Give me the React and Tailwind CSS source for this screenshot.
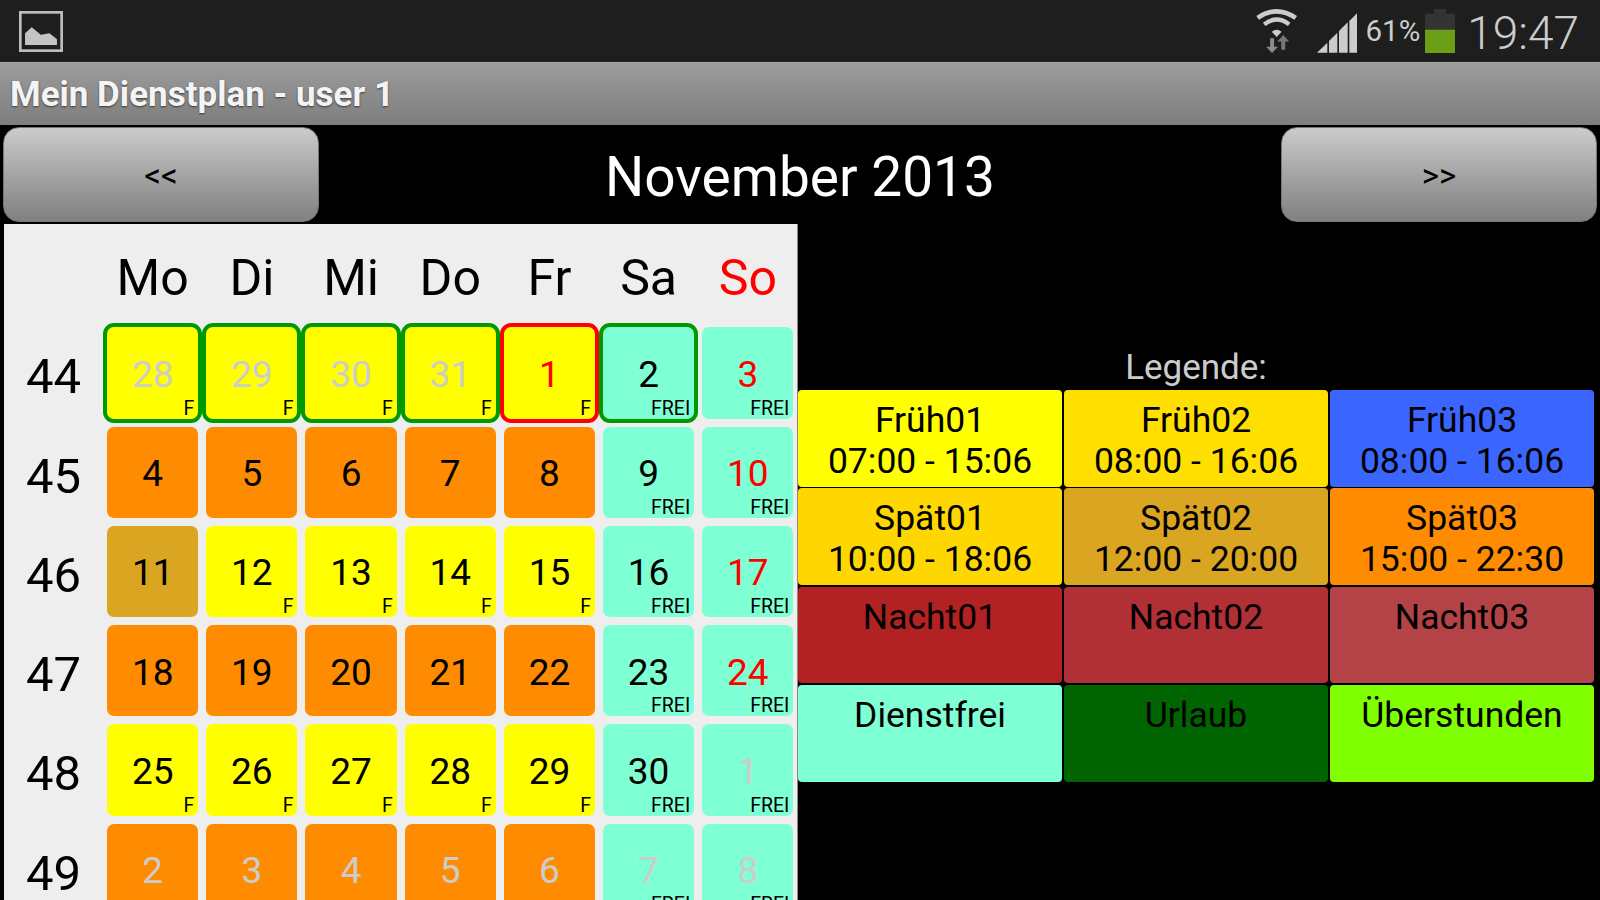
const weeks = [
  { nr: 44, days: [
    { d: 28, c: "bg-[#ffff00]", tag: "F", dim: true, ring: "border-[#009900]" },
    { d: 29, c: "bg-[#ffff00]", tag: "F", dim: true, ring: "border-[#009900]" },
    { d: 30, c: "bg-[#ffff00]", tag: "F", dim: true, ring: "border-[#009900]" },
    { d: 31, c: "bg-[#ffff00]", tag: "F", dim: true, ring: "border-[#009900]" },
    { d: 1, c: "bg-[#ffff00]", tag: "F", red: true, ring: "border-[#ff0000]" },
    { d: 2, c: "bg-[#7fffd4]", tag: "FREI", ring: "border-[#009900]" },
    { d: 3, c: "bg-[#7fffd4]", tag: "FREI", red: true },
  ] },
  { nr: 45, days: [
    { d: 4, c: "bg-[#ff8c00]" },
    { d: 5, c: "bg-[#ff8c00]" },
    { d: 6, c: "bg-[#ff8c00]" },
    { d: 7, c: "bg-[#ff8c00]" },
    { d: 8, c: "bg-[#ff8c00]" },
    { d: 9, c: "bg-[#7fffd4]", tag: "FREI" },
    { d: 10, c: "bg-[#7fffd4]", tag: "FREI", red: true },
  ] },
  { nr: 46, days: [
    { d: 11, c: "bg-[#daa520]" },
    { d: 12, c: "bg-[#ffff00]", tag: "F" },
    { d: 13, c: "bg-[#ffff00]", tag: "F" },
    { d: 14, c: "bg-[#ffff00]", tag: "F" },
    { d: 15, c: "bg-[#ffff00]", tag: "F" },
    { d: 16, c: "bg-[#7fffd4]", tag: "FREI" },
    { d: 17, c: "bg-[#7fffd4]", tag: "FREI", red: true },
  ] },
  { nr: 47, days: [
    { d: 18, c: "bg-[#ff8c00]" },
    { d: 19, c: "bg-[#ff8c00]" },
    { d: 20, c: "bg-[#ff8c00]" },
    { d: 21, c: "bg-[#ff8c00]" },
    { d: 22, c: "bg-[#ff8c00]" },
    { d: 23, c: "bg-[#7fffd4]", tag: "FREI" },
    { d: 24, c: "bg-[#7fffd4]", tag: "FREI", red: true },
  ] },
  { nr: 48, days: [
    { d: 25, c: "bg-[#ffff00]", tag: "F" },
    { d: 26, c: "bg-[#ffff00]", tag: "F" },
    { d: 27, c: "bg-[#ffff00]", tag: "F" },
    { d: 28, c: "bg-[#ffff00]", tag: "F" },
    { d: 29, c: "bg-[#ffff00]", tag: "F" },
    { d: 30, c: "bg-[#7fffd4]", tag: "FREI" },
    { d: 1, c: "bg-[#7fffd4]", tag: "FREI", dim: true },
  ] },
  { nr: 49, days: [
    { d: 2, c: "bg-[#ff8c00]", dim: true },
    { d: 3, c: "bg-[#ff8c00]", dim: true },
    { d: 4, c: "bg-[#ff8c00]", dim: true },
    { d: 5, c: "bg-[#ff8c00]", dim: true },
    { d: 6, c: "bg-[#ff8c00]", dim: true },
    { d: 7, c: "bg-[#7fffd4]", tag: "FREI", dim: true },
    { d: 8, c: "bg-[#7fffd4]", tag: "FREI", dim: true },
  ] },
];

const legend = [
  { name: "Früh01", time: "07:00 - 15:06", c: "bg-[#ffff00]" },
  { name: "Früh02", time: "08:00 - 16:06", c: "bg-[#ffdf00]" },
  { name: "Früh03", time: "08:00 - 16:06", c: "bg-[#3a66ff]" },
  { name: "Spät01", time: "10:00 - 18:06", c: "bg-[#ffd700]" },
  { name: "Spät02", time: "12:00 - 20:00", c: "bg-[#daa520]" },
  { name: "Spät03", time: "15:00 - 22:30", c: "bg-[#ff8c00]" },
  { name: "Nacht01", c: "bg-[#b22222]" },
  { name: "Nacht02", c: "bg-[#b03035]" },
  { name: "Nacht03", c: "bg-[#b34346]" },
  { name: "Dienstfrei", c: "bg-[#7fffd4]" },
  { name: "Urlaub", c: "bg-[#006400]" },
  { name: "Überstunden", c: "bg-[#7fff00]" },
];

const dayNames = ["Mo", "Di", "Mi", "Do", "Fr", "Sa", "So"];

const GalleryIcon = () => (
  <svg width="44" height="41" viewBox="57 34 131 122">
    <rect x="61" y="38" width="123" height="114" fill="none" stroke="#bdbdbd" strokeWidth="8" />
    <polygon points="75,135 75,100 95,82 122,105 148,100 170,118 170,135" fill="#c4c4c4" />
  </svg>
);

const WifiIcon = () => (
  <svg width="44" height="46" viewBox="165 20 132 140">
    <path d="M172 50 Q230 10 288 50" fill="none" stroke="#cccccc" strokeWidth="14" />
    <path d="M192 70 Q230 40 268 70" fill="none" stroke="#cccccc" strokeWidth="13" />
    <path d="M215 92 Q230 80 245 92 L230 108 Z" fill="#cccccc" />
    <path d="M210 112 H222 V138 H234 L216 157 L198 138 H210 Z" fill="#8c8c8c" />
    <path d="M244 147 H256 V122 H268 L250 102 L232 122 H244 Z" fill="#777777" />
  </svg>
);

const SignalIcon = () => (
  <svg width="40" height="40" viewBox="350 40 120 118" fill="#cccccc">
    <polygon points="350,158 381,128 381,158" />
    <polygon points="386,123 411,98 411,158 386,158" />
    <polygon points="416,93 442,67 442,158 416,158" />
    <polygon points="447,63 470,40 470,158 447,158" />
  </svg>
);

const BatteryIcon = () => (
  <svg width="30" height="44" viewBox="675 28 90 132">
    <rect x="702" y="28" width="36" height="14" fill="#333333" />
    <rect x="675" y="42" width="90" height="48" fill="#333333" />
    <rect x="675" y="90" width="90" height="70" fill="#6d9e18" />
  </svg>
);

const DayCell = ({ day }) => (
  <div
    className={`relative flex items-center justify-center rounded-[11px] border-4 bg-clip-padding pt-[3px] text-[37px] leading-none ${day.c} ${
      day.ring || "border-transparent"
    } ${day.dim ? "text-[#cccccc]" : day.red ? "text-[#ff0000]" : "text-black"}`}
  >
    {day.d}
    {day.tag && (
      <span className="absolute right-[4px] bottom-[-1px] text-[19.5px] leading-[22px] text-black">{day.tag}</span>
    )}
  </div>
);

const NavButton = ({ label }) => (
  <button className="flex h-[95px] w-[316px] items-center justify-center rounded-[16px] border border-[#777777] bg-gradient-to-b from-[#cbcbcb] to-[#808080] pt-[2px] text-[33px] leading-none text-black">
    {label}
  </button>
);

export default function App() {
  return (
    <div className="flex h-[900px] w-[1600px] flex-col overflow-hidden bg-black font-['Roboto',sans-serif]">
      {/* status bar */}
      <div className="flex h-[62px] shrink-0 items-center justify-between bg-[#1e1e1e] pl-[19px] pr-[21px]">
        <GalleryIcon />
        <div className="flex items-center text-[#cccccc]">
          <WifiIcon />
          <div className="ml-[18px] mt-[3px]"><SignalIcon /></div>
          <span className="ml-[9px] mt-[2px] text-[29.5px] leading-none">61%</span>
          <div className="ml-[5px]"><BatteryIcon /></div>
          <span className="ml-[12px] mt-[4px] text-[46px] font-light leading-none">19:47</span>
        </div>
      </div>

      {/* title bar */}
      <div className="flex h-[63px] shrink-0 items-center border-t border-[#a8a8a8] bg-gradient-to-b from-[#9c9c9c] to-[#7e7e7e] pl-[10px]">
        <span className="text-[35px] font-bold leading-none text-[#f4f4f4] [text-shadow:0_1px_2px_rgba(0,0,0,0.6)]">
          Mein Dienstplan - user 1
        </span>
      </div>

      {/* month switcher */}
      <div className="flex h-[99px] shrink-0 items-start justify-between px-[3px] pt-[2px]">
        <NavButton label="<<" />
        <span className="self-center pt-[4px] text-[55px] leading-none text-white">November 2013</span>
        <NavButton label=">>" />
      </div>

      <div className="flex min-h-0 flex-1 pl-[4px]">
        {/* calendar */}
        <div className="grid w-[794px] shrink-0 auto-rows-[99.25px] grid-cols-[99.1px_repeat(7,99.2px)] content-start border-r border-[#8a8a8a] bg-[#eeeeee]">
          <div />
          {dayNames.map((name) => (
            <div
              key={name}
              className={`flex items-center justify-center pt-[9px] text-[50px] leading-none ${
                name === "So" ? "text-[#ff0000]" : "text-black"
              }`}
            >
              {name}
            </div>
          ))}
          {weeks.map((week) => (
            <div key={week.nr} className="contents">
              <div className="flex items-center justify-center pt-[8px] text-[49px] leading-none text-black">{week.nr}</div>
              {week.days.map((day) => (
                <DayCell key={`${week.nr}-${day.d}`} day={day} />
              ))}
            </div>
          ))}
        </div>

        {/* legend */}
        <div className="flex-1 pr-[6px]">
          <div className="h-[166px] pt-[123px] text-center text-[35px] leading-[42px] text-[#cccccc]">Legende:</div>
          <div className="grid auto-rows-[96.8px] grid-cols-3 gap-x-[2px] gap-y-[1.5px]">
            {legend.map((item) => (
              <div key={item.name} className={`rounded-[4px] pt-[10px] text-center text-[35.5px] leading-[41px] text-black ${item.c}`}>
                <div>{item.name}</div>
                {item.time && <div>{item.time}</div>}
              </div>
            ))}
          </div>
        </div>
      </div>
    </div>
  );
}
